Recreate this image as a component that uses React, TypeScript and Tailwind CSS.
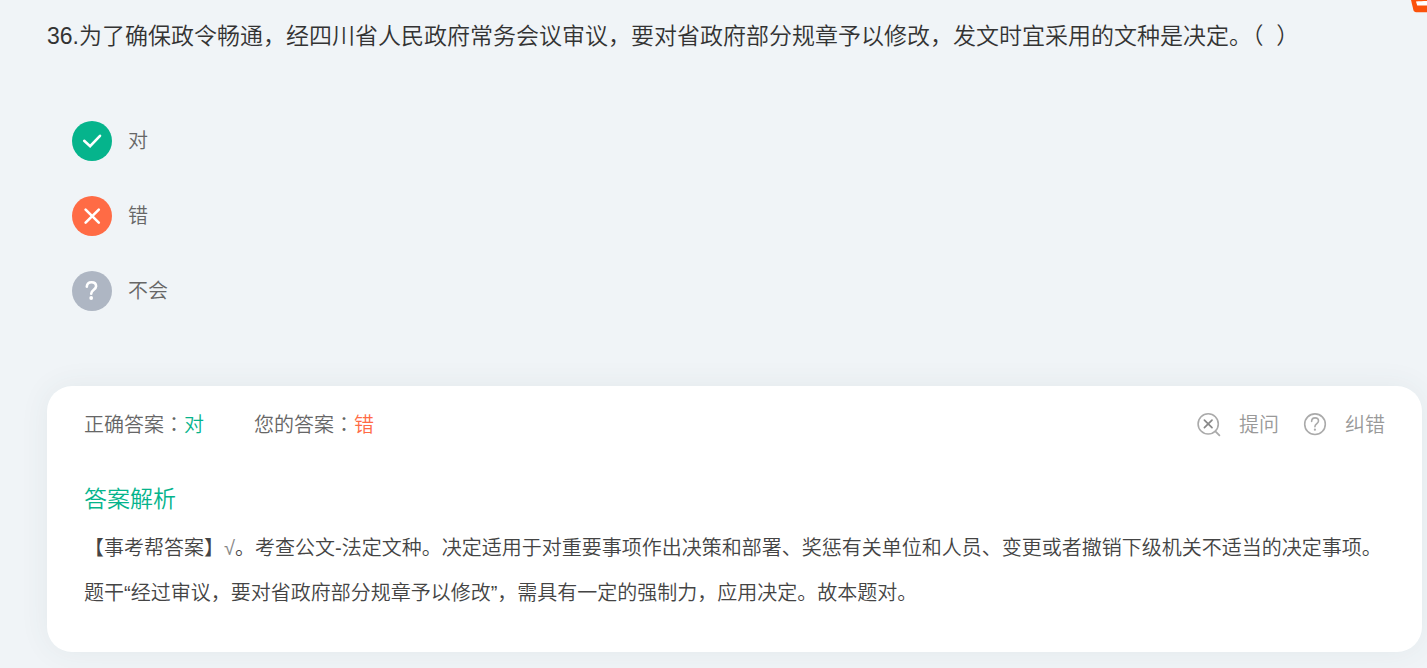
import {useState} from "react";

const font = "font-['Liberation_Sans','Noto_Sans_CJK_SC',sans-serif]";

const options = [
    { id: 'right', label: '对', color: 'bg-[#05b48c]' },
    { id: 'wrong', label: '错', color: 'bg-[#ff6b45]' },
    { id: 'unknown', label: '不会', color: 'bg-[#aeb6c3]' },
];

function OptionIcon({ id }: { id: string }) {
    return (
        <svg viewBox="0 0 40 40" className="size-10" fill="none" stroke="#fff" strokeWidth="2.6" strokeLinecap="round" aria-hidden="true">
            {id === 'right' && <path d="M12.2 19.8l5.9 5.4 9.9-10.4"/>}
            {id === 'wrong' && <path d="M13.6 13.6l13.2 13M26.8 13.6l-13.2 13"/>}
            {id === 'unknown' && <>
                <path d="M14.8 15.6c.2-2.9 2-4.4 4.7-4.4 2.8 0 4.6 1.6 4.6 4.1 0 3.4-4.9 3.5-4.9 7.4"/>
                <circle cx="19.2" cy="27" r="1.9" fill="#fff" stroke="none"/>
            </>}
        </svg>
    );
}

function AskIcon() {
    return (
        <svg viewBox="0 0 24 24" className="size-6" fill="none" strokeLinecap="round" aria-hidden="true">
            <circle cx="11.2" cy="10.9" r="10.1" stroke="#aaa" strokeWidth="1.6"/>
            <path d="M18.4 18.4l4 4" stroke="#aaa" strokeWidth="1.8"/>
            <path d="M7.4 7.1l7.6 7.6M15 7.1l-7.6 7.6" stroke="#888" strokeWidth="1.7"/>
        </svg>
    );
}

function HelpIcon() {
    return (
        <svg viewBox="0 0 24 24" className="size-6" fill="none" stroke="#aaa" strokeWidth="1.6" strokeLinecap="round" aria-hidden="true">
            <circle cx="12" cy="11.2" r="10.3"/>
            <path d="M8.6 8.4c.1-2.2 1.5-3.5 3.5-3.5s3.4 1.2 3.4 3.1c0 2.5-3.6 2.7-3.6 5.7"/>
            <circle cx="11.9" cy="16.7" r="1.1" fill="#aaa" stroke="none"/>
        </svg>
    );
}

function Colon() {
    return <span className="font-['Noto_Sans_CJK_TC',sans-serif]" lang="zh-TW">：</span>;
}

export default function App() {
    const [selected, setSelected] = useState('wrong');

    return (
        <main className={`${font} relative min-h-screen overflow-hidden bg-[#f0f4f7] pt-3 pr-[5px] pb-4 pl-[47px] font-[350]`}>
            {/* floating badge on the page edge */}
            <svg viewBox="0 0 16 13" className="absolute top-0 right-0 h-[13px] w-4" aria-hidden="true">
                <path d="M0 0h16v12.2H5.2C3.6 12.2 2.8 11.4 2.4 10z" fill="#fb520c"/>
                <path d="M5 1.6C8 1 12 .9 16 .9v4.7H6.2z" fill="#fff"/>
            </svg>

            <h1 className="text-[23px] leading-12 text-[#333] font-[350]">
                36.为了确保政令畅通，经四川省人民政府常务会议审议，要对省政府部分规章予以修改，发文时宜采用的文种是决定。（&nbsp; ）
            </h1>

            <div className="mt-[61px] ml-[25px] flex flex-col items-start gap-[35px]">
                {options.map((option) => (
                    <button key={option.id} type="button" aria-pressed={selected === option.id} onClick={() => setSelected(option.id)} className="flex cursor-pointer items-center gap-4 text-xl leading-10 text-[#666]">
                        <span className={`${option.color} rounded-full`}><OptionIcon id={option.id}/></span>
                        {option.label}
                    </button>
                ))}
            </div>

            <section className="mt-[75px] rounded-[25px] bg-white px-[37px] pt-[18px] pb-9 shadow-[0_0_30px_rgba(60,80,90,0.07)]">
                <div className="flex items-center justify-between text-xl leading-10 text-[#666]">
                    <div className="flex gap-[50px]">
                        <p>正确答案<Colon/><span className="text-[#05b48c]">对</span></p>
                        <p>您的答案<Colon/><span className="text-[#ff6b45]">错</span></p>
                    </div>
                    <div className="flex gap-6 text-[#999]">
                        <button type="button" className="flex cursor-pointer items-center gap-[18px]"><AskIcon/>提问</button>
                        <button type="button" className="flex cursor-pointer items-center gap-[18px]"><HelpIcon/>纠错</button>
                    </div>
                </div>

                <h2 className="mt-[30px] mb-[3px] text-[23px] leading-12 font-[350] text-[#05b48c]">答案解析</h2>
                <div className="text-xl leading-[45px] text-[#444]">
                    <p>【事考帮答案】<span className="text-[#888]">√</span>。考查公文-法定文种。决定适用于对重要事项作出决策和部署、奖惩有关单位和人员、变更或者撤销下级机关不适当的决定事项。</p>
                    <p>题干“经过审议，要对省政府部分规章予以修改”，需具有一定的强制力，应用决定。故本题对。</p>
                </div>
            </section>
        </main>
    );
}
